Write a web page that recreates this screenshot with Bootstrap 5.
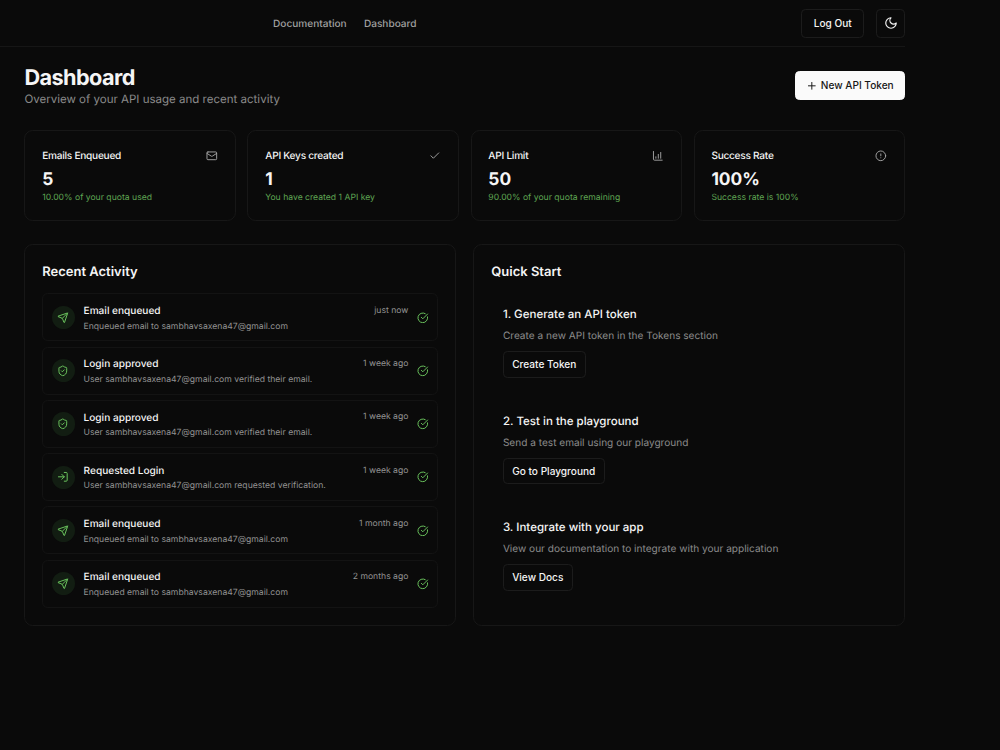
<!DOCTYPE html>
<html lang="en">
<head>
<meta charset="utf-8">
<meta name="viewport" content="width=device-width, initial-scale=1">
<title>Dashboard</title>
<link href="https://cdn.jsdelivr.net/npm/bootstrap@5.3.0/dist/css/bootstrap.min.css" rel="stylesheet">
<style>
html{font-size:11.65px}
body{background:#0a0a0a;color:#f5f5f5;font-family:Inter,"Liberation Sans",sans-serif;font-size:10.1px;line-height:14.6px;overflow:hidden;text-rendering:geometricPrecision}
.shell{width:905px}
.topbar{height:47px;border-bottom:1px solid #161616}
.topbar nav{margin-left:273px;padding-top:2px;gap:17.3px}
.topbar nav a{color:#a1a1a1;text-decoration:none;font-weight:500}
.content{padding:17px 0 0 24.4px}
.muted{color:#8b8b8b}
svg.muted{color:#a1a1a1}
.green{color:#5fa552}
svg.green{color:#6cc65f}
.btn{--bs-btn-font-size:10.1px;--bs-btn-font-weight:500;--bs-btn-line-height:14.6px;--bs-btn-color:#f5f5f5;--bs-btn-border-color:#1c1c1c;--bs-btn-border-radius:4.4px;--bs-btn-padding-y:0;--bs-btn-padding-x:11.6px;display:inline-flex;align-items:center;height:29px}
.btn-token{--bs-btn-color:#171717;--bs-btn-bg:#fafafa;--bs-btn-border-color:#fafafa;--bs-btn-padding-x:10.3px;gap:2.9px}
.btn-theme{width:29px;padding:0;justify-content:center}
.btn-step{height:26.4px;--bs-btn-padding-x:8.3px}
.heading{padding-top:1px;margin-bottom:-1px}
h1{font-size:21.7px;font-weight:700;line-height:26px;letter-spacing:-.58px;margin:0}
.lede{font-size:11.52px;line-height:17px}
.stats{display:grid;grid-template-columns:repeat(4,1fr);gap:11.65px;margin-top:22.6px}
.box{border:1px solid #171717;border-radius:8.7px;background:#0a0a0a}
.stat{height:91px;padding:18px 16.9px 0 16.8px}
.stat-name{font-weight:500;letter-spacing:-.25px}
.stat-value{font-size:17.4px;font-weight:700;line-height:23.3px;margin-top:5px}
.stat-note,.when,.detail{font-size:8.64px;line-height:11.65px}
.stat-note{margin-top:1.2px}
.panels{display:grid;grid-template-columns:1fr 1fr;gap:17.5px;margin-top:23.3px}
.panel{height:382px;padding:17.6px 16.8px}
h2{font-size:13px;font-weight:600;line-height:20px;margin:0 0 11px}
.event{height:48px;border:1px solid #131313;border-radius:5.8px;padding:0 8.4px;margin-bottom:5.25px}
.disc{width:23.3px;height:23.3px;border-radius:50%;background:#121d12;color:#6cc65f;margin-right:8.7px}
.event-text{padding-top:2.4px}
.event-name{font-weight:500;line-height:14.6px}
.detail{margin-top:3px}
.when{padding-top:.7px}
.when,.detail{color:#929292}
.step{height:106.5px;padding:12.7px 11.65px 0}
.step h3{font-size:11.52px;font-weight:500;line-height:17.5px;margin:0 0 5.5px}
.step p{line-height:14.6px;margin:0 0 7.6px}
svg{fill:none;stroke:currentColor;stroke-width:2;stroke-linecap:round;stroke-linejoin:round;width:11.65px;height:11.65px;flex:none;display:block}
</style>
</head>
<body>
<svg style="display:none">
  <symbol id="send" viewBox="0 0 24 24"><path d="M14.5 21.7a.5.5 0 0 0 .9 0l6.500-19a.5.5 0 0 0-.6-.6l-19 6.500a.5.5 0 0 0 0 .9l7.900 3.200a2 2 0 0 1 1.100 1.100zM21.900 2.100 10.900 13.100"/></symbol>
  <symbol id="shield" viewBox="0 0 24 24"><path d="M20 13c0 5-3.500 7.500-7.700 9a1 1 0 0 1-.7 0C7.500 20.500 4 18 4 13V6a1 1 0 0 1 1-1c2 0 4.500-1.200 6.200-2.700a1.200 1.200 0 0 1 1.500 0C14.500 3.800 17 5 19 5a1 1 0 0 1 1 1zM9 12l2 2 4-4"/></symbol>
  <symbol id="login" viewBox="0 0 24 24"><path d="M15 3h4a2 2 0 0 1 2 2v14a2 2 0 0 1-2 2h-4M10 17l5-5-5-5M15 12H3"/></symbol>
  <symbol id="done" viewBox="0 0 24 24"><path d="M21.800 10A10 10 0 1 1 17 3.300M9 11l3 3L22 4"/></symbol>
</svg>
<div class="shell">
  <header class="topbar d-flex align-items-center">
    <nav class="d-flex"><a href="#">Documentation</a><a href="#">Dashboard</a></nav>
    <div class="d-flex ms-auto" style="gap:11.65px">
      <button class="btn">Log Out</button>
      <button class="btn btn-theme" aria-label="Theme"><svg style="width:14px;height:14px" viewBox="0 0 24 24"><path d="M12 3a6 6 0 0 0 9 9 9 9 0 1 1-9-9Z"/></svg></button>
    </div>
  </header>
  <main class="content">
    <div class="d-flex justify-content-between align-items-center">
      <div class="heading"><h1>Dashboard</h1><div class="lede muted">Overview of your API usage and recent activity</div></div>
      <button class="btn btn-token"><svg viewBox="0 0 24 24"><path d="M5 12h14M12 5v14"/></svg>New API Token</button>
    </div>
    <section class="stats">
      <div class="box stat"><div class="d-flex justify-content-between align-items-center stat-name">Emails Enqueued<svg class="muted" viewBox="0 0 24 24"><rect x="2" y="4" width="20" height="16" rx="2"/><path d="m22 7-9 5.700a2 2 0 0 1-2 0L2 7"/></svg></div><div class="stat-value">5</div><div class="stat-note green">10.00% of your quota used</div></div>
      <div class="box stat"><div class="d-flex justify-content-between align-items-center stat-name">API Keys created<svg class="muted" viewBox="0 0 24 24"><path d="M20 6 9 17l-5-5"/></svg></div><div class="stat-value">1</div><div class="stat-note green">You have created 1 API key</div></div>
      <div class="box stat"><div class="d-flex justify-content-between align-items-center stat-name">API Limit<svg class="muted" viewBox="0 0 24 24"><path d="M3 3v16a2 2 0 0 0 2 2h16M13 17V9M18 17V5M8 17v-3"/></svg></div><div class="stat-value">50</div><div class="stat-note green">90.00% of your quota remaining</div></div>
      <div class="box stat"><div class="d-flex justify-content-between align-items-center stat-name">Success Rate<svg class="muted" viewBox="0 0 24 24"><circle cx="12" cy="12" r="10"/><path d="M12 8v4M12 16h.01"/></svg></div><div class="stat-value">100%</div><div class="stat-note green">Success rate is 100%</div></div>
    </section>
    <section class="panels">
      <div class="box panel"><h2>Recent Activity</h2><div id="events"></div></div>
      <div class="box panel"><h2>Quick Start</h2>
        <div class="step"><h3>1. Generate an API token</h3><p class="muted">Create a new API token in the Tokens section</p><button class="btn btn-step">Create Token</button></div>
        <div class="step"><h3>2. Test in the playground</h3><p class="muted">Send a test email using our playground</p><button class="btn btn-step">Go to Playground</button></div>
        <div class="step"><h3>3. Integrate with your app</h3><p class="muted">View our documentation to integrate with your application</p><button class="btn btn-step">View Docs</button></div>
      </div>
    </section>
  </main>
</div>
<script src="https://cdn.jsdelivr.net/npm/bootstrap@5.3.0/dist/js/bootstrap.bundle.min.js"></script>
<script>
const mail = 'sambhavsaxena47@gmail.com';
const events = [
  ['send', 'Email enqueued', `Enqueued email to ${mail}`, 'just now'],
  ['shield', 'Login approved', `User ${mail} verified their email.`, '1 week ago'],
  ['shield', 'Login approved', `User ${mail} verified their email.`, '1 week ago'],
  ['login', 'Requested Login', `User ${mail} requested verification.`, '1 week ago'],
  ['send', 'Email enqueued', `Enqueued email to ${mail}`, '1 month ago'],
  ['send', 'Email enqueued', `Enqueued email to ${mail}`, '2 months ago']
];
document.getElementById('events').innerHTML = events.map(([icon, name, detail, when]) => `
  <div class="event d-flex align-items-center">
    <div class="disc d-flex align-items-center justify-content-center"><svg><use href="#${icon}"/></svg></div>
    <div class="event-text flex-grow-1"><div class="d-flex justify-content-between align-items-center"><div class="event-name">${name}</div><div class="when">${when}</div></div><div class="detail">${detail}</div></div>
    <svg class="green" style="margin-left:8.7px"><use href="#done"/></svg>
  </div>`).join('');
</script>
</body>
</html>
